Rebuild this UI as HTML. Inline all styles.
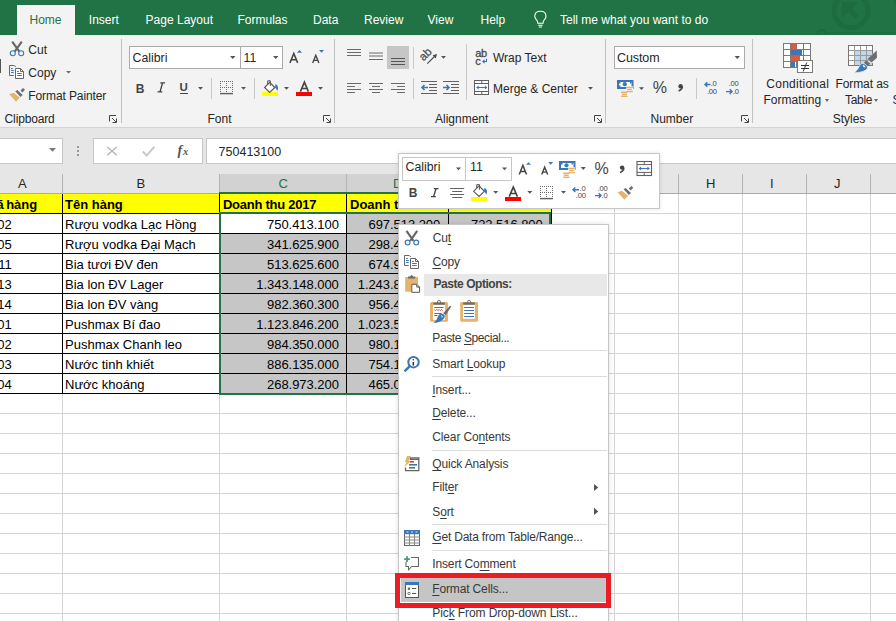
<!DOCTYPE html><html><head><meta charset="utf-8"><style>
html,body{margin:0;padding:0;width:896px;height:621px;overflow:hidden;background:#fff;position:relative;font-family:"Liberation Sans",sans-serif}
.r{position:absolute;box-sizing:border-box}
.t{position:absolute;white-space:pre}
u{text-decoration:underline;text-underline-offset:2px;text-decoration-thickness:1px}
svg.r{overflow:visible}
</style></head><body>
<div class="r" style="left:0px;top:0px;width:896px;height:35px;background:#217346"></div>
<div class="r" style="left:17px;top:5px;width:58px;height:30px;background:#f3f3f3"></div>
<span class="t" style="left:29.5px;top:13.54px;font-size:12px;line-height:12px;color:#217346;font-weight:400;">Home</span>
<span class="t" style="left:88.8px;top:13.54px;font-size:12px;line-height:12px;color:#ffffff;font-weight:400;">Insert</span>
<span class="t" style="left:145.6px;top:13.54px;font-size:12px;line-height:12px;color:#ffffff;font-weight:400;">Page Layout</span>
<span class="t" style="left:237.5px;top:13.54px;font-size:12px;line-height:12px;color:#ffffff;font-weight:400;">Formulas</span>
<span class="t" style="left:313.0px;top:13.54px;font-size:12px;line-height:12px;color:#ffffff;font-weight:400;">Data</span>
<span class="t" style="left:364.0px;top:13.54px;font-size:12px;line-height:12px;color:#ffffff;font-weight:400;">Review</span>
<span class="t" style="left:427.5px;top:13.54px;font-size:12px;line-height:12px;color:#ffffff;font-weight:400;">View</span>
<span class="t" style="left:480.5px;top:13.54px;font-size:12px;line-height:12px;color:#ffffff;font-weight:400;">Help</span>
<span class="t" style="left:560.0px;top:13.54px;font-size:12px;line-height:12px;color:#ffffff;font-weight:400;">Tell me what you want to do</span>
<div class="r" style="left:0px;top:35px;width:896px;height:92px;background:#f3f3f3"></div>
<div class="r" style="left:0px;top:127px;width:896px;height:1px;background:#d4d4d4"></div>
<div class="r" style="left:121px;top:39px;width:1px;height:84px;background:#c2c2c2"></div>
<div class="r" style="left:334px;top:39px;width:1px;height:84px;background:#c2c2c2"></div>
<div class="r" style="left:605px;top:39px;width:1px;height:84px;background:#c2c2c2"></div>
<div class="r" style="left:752px;top:39px;width:1px;height:84px;background:#c2c2c2"></div>
<div class="r" style="left:129px;top:46px;width:112px;height:23px;background:#fff;border:1px solid #ababab"></div>
<div class="r" style="left:240px;top:46px;width:43px;height:23px;background:#fff;border:1px solid #ababab"></div>
<div class="r" style="left:211px;top:78px;width:1px;height:21px;background:#c8c8c8"></div>
<div class="r" style="left:254px;top:78px;width:1px;height:21px;background:#c8c8c8"></div>
<div class="r" style="left:262px;top:92px;width:16px;height:4px;background:#ffff00"></div>
<div class="r" style="left:296px;top:92px;width:16px;height:4px;background:#ff0000"></div>
<div class="r" style="left:387px;top:46px;width:22px;height:23px;background:#c6c6c6"></div>
<div class="r" style="left:413px;top:47px;width:1px;height:22px;background:#c8c8c8"></div>
<div class="r" style="left:413px;top:78px;width:1px;height:21px;background:#c8c8c8"></div>
<div class="r" style="left:466px;top:44px;width:1px;height:56px;background:#c8c8c8"></div>
<div class="r" style="left:614px;top:46px;width:131px;height:23px;background:#fff;border:1px solid #ababab"></div>
<div class="r" style="left:696px;top:78px;width:1px;height:21px;background:#c8c8c8"></div>
<svg class="r" style="left:0;top:0" width="896" height="621" viewBox="0 0 896 621"><path d="M12.2 41.6 L19.4 51.6 M21.8 41.6 L14.6 51.6" stroke="#666" stroke-width="2.1" fill="none"/><circle cx="12.8" cy="53.3" r="2.5" stroke="#3a76b8" stroke-width="1.1" fill="#f3f3f3"/><circle cx="21.2" cy="53.3" r="2.5" stroke="#3a76b8" stroke-width="1.1" fill="#f3f3f3"/><g transform="translate(-395 -190)"><path d="M408.8 265.5 H404.5 V255.5 H409.3 L410.8 257" stroke="#666" stroke-width="1" fill="none"/><path d="M410.5 258.5 H415.5 L418.5 261.5 V268.5 H410.5 Z" stroke="#666" stroke-width="1" fill="#fff"/><path d="M415.5 258.5 V261.5 H418.5" stroke="#666" stroke-width="1" fill="none"/><path d="M406 258.5 H407.8 M406 260.5 H408.8 M406 262.5 H408.8 M412.1 261.5 H413.8 M412.1 263.5 H416.8 M412.1 265.5 H416.8" stroke="#3a76b8" stroke-width="1"/></g><path d="M9.2 94.3 L13.7 92.7 L19.8 97.8 L16 101.7 Z" fill="#e3b46a"/><path d="M15.3 91.2 L17.3 90 L22.7 95 L20.5 96.9 Z M20.5 90.4 L23 88 L25 89.8 L22.4 92.4 Z" fill="#6e6e6e"/><path d="M66 71 H71 L68.5 73.5 Z" fill="#6b6b6b"/><path d="M109.5 121.5 V115.5 H116" stroke="#444" stroke-width="1" fill="none"/><path d="M112 118 L116 122" stroke="#444" stroke-width="1" fill="none"/><path d="M116.5 118.5 V122.5 H112.5" stroke="#444" stroke-width="1" fill="none"/><path d="M323.5 121.5 V115.5 H330" stroke="#444" stroke-width="1" fill="none"/><path d="M326 118 L330 122" stroke="#444" stroke-width="1" fill="none"/><path d="M330.5 118.5 V122.5 H326.5" stroke="#444" stroke-width="1" fill="none"/><path d="M594.5 121.5 V115.5 H601" stroke="#444" stroke-width="1" fill="none"/><path d="M597 118 L601 122" stroke="#444" stroke-width="1" fill="none"/><path d="M601.5 118.5 V122.5 H597.5" stroke="#444" stroke-width="1" fill="none"/><path d="M741.5 121.5 V115.5 H748" stroke="#444" stroke-width="1" fill="none"/><path d="M744 118 L748 122" stroke="#444" stroke-width="1" fill="none"/><path d="M748.5 118.5 V122.5 H744.5" stroke="#444" stroke-width="1" fill="none"/><path d="M230 56 H235.5 L232.75 59 Z M273 56 H278.5 L275.75 59 Z" fill="#555"/><path d="M297 52.8 L299.5 50 L302 52.8 Z" fill="#3a76b8"/><path d="M319 50 H324 L321.5 52.8 Z" fill="#3a76b8"/><path d="M289.95 62.9 L293.80 53.4 L297.65 62.9 M290.67 59.76 H296.93" stroke="#444" stroke-width="1.5" fill="none" stroke-linejoin="miter"/><path d="M312.70 62.9 L315.80 55.3 L318.90 62.9 M313.22 60.37 H318.38" stroke="#444" stroke-width="1.4" fill="none" stroke-linejoin="miter"/><path d="M300.40 91.6 L304.40 82.1 L308.40 91.6 M301.14 88.46 H307.66" stroke="#444" stroke-width="1.6" fill="none" stroke-linejoin="miter"/><rect x="220" y="81" width="1" height="1" fill="#6a6a6a"/><rect x="220" y="83" width="1" height="1" fill="#6a6a6a"/><rect x="220" y="85" width="1" height="1" fill="#6a6a6a"/><rect x="220" y="87" width="1" height="1" fill="#6a6a6a"/><rect x="220" y="89" width="1" height="1" fill="#6a6a6a"/><rect x="220" y="91" width="1" height="1" fill="#6a6a6a"/><rect x="222" y="81" width="1" height="1" fill="#6a6a6a"/><rect x="222" y="87" width="1" height="1" fill="#6a6a6a"/><rect x="224" y="81" width="1" height="1" fill="#6a6a6a"/><rect x="224" y="87" width="1" height="1" fill="#6a6a6a"/><rect x="226" y="81" width="1" height="1" fill="#6a6a6a"/><rect x="226" y="83" width="1" height="1" fill="#6a6a6a"/><rect x="226" y="85" width="1" height="1" fill="#6a6a6a"/><rect x="226" y="87" width="1" height="1" fill="#6a6a6a"/><rect x="226" y="89" width="1" height="1" fill="#6a6a6a"/><rect x="226" y="91" width="1" height="1" fill="#6a6a6a"/><rect x="228" y="81" width="1" height="1" fill="#6a6a6a"/><rect x="228" y="87" width="1" height="1" fill="#6a6a6a"/><rect x="230" y="81" width="1" height="1" fill="#6a6a6a"/><rect x="230" y="87" width="1" height="1" fill="#6a6a6a"/><rect x="232" y="81" width="1" height="1" fill="#6a6a6a"/><rect x="232" y="83" width="1" height="1" fill="#6a6a6a"/><rect x="232" y="85" width="1" height="1" fill="#6a6a6a"/><rect x="232" y="87" width="1" height="1" fill="#6a6a6a"/><rect x="232" y="89" width="1" height="1" fill="#6a6a6a"/><rect x="232" y="91" width="1" height="1" fill="#6a6a6a"/><path d="M220 93.6 H233" stroke="#606060" stroke-width="1.4"/><path d="M198 87 H203 L200.5 89.7 Z" fill="#555"/><path d="M241 87 H246 L243.5 89.7 Z" fill="#555"/><path d="M284 87 H289 L286.5 89.7 Z" fill="#555"/><path d="M318 87 H323 L320.5 89.7 Z" fill="#555"/><path d="M264.6 87.5 L269.7 82.4 L274.8 87.5 L269.7 92.4 Z" stroke="#555" stroke-width="1.1" fill="#fff"/><path d="M267.7 84.3 V80.8 H270.3 V86" stroke="#555" stroke-width="1" fill="none"/><path d="M275.5 84 Q279.5 86 277.3 91 Q276.5 88.5 275 87.5 Z" fill="#3a76b8"/><path d="M347 49.5 H361" stroke="#6a6a6a" stroke-width="1"/><path d="M347 52.5 H361" stroke="#6a6a6a" stroke-width="1"/><path d="M347 55.5 H361" stroke="#6a6a6a" stroke-width="1"/><path d="M369 53 H383" stroke="#6a6a6a" stroke-width="1"/><path d="M369 56 H383" stroke="#6a6a6a" stroke-width="1"/><path d="M369 59.5 H383" stroke="#6a6a6a" stroke-width="1"/><path d="M391 58.5 H405" stroke="#555" stroke-width="1"/><path d="M391 61.5 H405" stroke="#555" stroke-width="1"/><path d="M391 64.5 H405" stroke="#555" stroke-width="1"/><path d="M347 83.5 H361" stroke="#6a6a6a" stroke-width="1"/><path d="M347 86.5 H354.98" stroke="#6a6a6a" stroke-width="1"/><path d="M347 89.5 H361" stroke="#6a6a6a" stroke-width="1"/><path d="M347 92.5 H354.98" stroke="#6a6a6a" stroke-width="1"/><path d="M369 83.5 H383" stroke="#6a6a6a" stroke-width="1"/><path d="M372.01 86.5 H379.99" stroke="#6a6a6a" stroke-width="1"/><path d="M369 89.5 H383" stroke="#6a6a6a" stroke-width="1"/><path d="M372.01 92.5 H379.99" stroke="#6a6a6a" stroke-width="1"/><path d="M391 83.5 H405" stroke="#6a6a6a" stroke-width="1"/><path d="M397.02 86.5 H405" stroke="#6a6a6a" stroke-width="1"/><path d="M391 89.5 H405" stroke="#6a6a6a" stroke-width="1"/><path d="M397.02 92.5 H405" stroke="#6a6a6a" stroke-width="1"/><text x="0" y="0" transform="translate(423.6 61.6) rotate(-45)" font-family="Liberation Sans" font-size="11.5" fill="#4a4a4a" stroke="#4a4a4a" stroke-width="0.25">ab</text><path d="M427.3 63.7 L435.5 55.5" stroke="#4a4a4a" stroke-width="1.1" fill="none"/><path d="M437 54 L432.6 55.2 L435.8 58.4 Z" fill="#4a4a4a"/><path d="M441 55.9 H446 L443.5 58.7 Z" fill="#555"/><path d="M421 81.5 H437 M429 84.5 H437 M429 87.5 H437 M429 90.5 H437 M421 93.5 H437" stroke="#606060" stroke-width="1.1"/><path d="M428 87.5 H422 M424.5 85 L422 87.5 L424.5 90" stroke="#3a76b8" stroke-width="1.6" fill="none"/><path d="M443 81.5 H459 M451 84.5 H459 M451 87.5 H459 M451 90.5 H459 M443 93.5 H459" stroke="#606060" stroke-width="1.1"/><path d="M443 87.5 H449 M446.5 85 L449 87.5 L446.5 90" stroke="#3a76b8" stroke-width="1.6" fill="none"/><text x="475.3" y="57.2" font-family="Liberation Sans" font-size="11" fill="#4a4a4a" stroke="#4a4a4a" stroke-width="0.3" letter-spacing="-0.3">ab</text><text x="475.3" y="64.5" font-family="Liberation Sans" font-size="11" fill="#4a4a4a" stroke="#4a4a4a" stroke-width="0.3">c</text><path d="M486.5 58.8 V61.5 H483 M484.6 59.8 L482.8 61.5 L484.6 63.2" stroke="#3a76b8" stroke-width="1.1" fill="none"/><rect x="474.5" y="80.5" width="14" height="14" stroke="#606060" stroke-width="1" fill="#fff"/><path d="M474.5 83.5 H488.5 M474.5 91.5 H488.5 M481.75 80.5 V83.6 M481.75 91.4 V94.5" stroke="#606060" stroke-width="1"/><path d="M476.8 87.5 H486.7" stroke="#3a76b8" stroke-width="1.1"/><path d="M476.2 87.5 L478.6 85.6 V89.4 Z M487.3 87.5 L484.9 85.6 V89.4 Z" fill="#3a76b8"/><path d="M588 87 H593 L590.5 89.7 Z" fill="#555"/><path d="M734.5 56 H740 L737.25 59 Z" fill="#555"/><rect x="618" y="81" width="14.5" height="7" stroke="#3a76b8" stroke-width="2" fill="#fff"/><path d="M619 82 h1.5 v1.5 h-1.5z M630 82 h1.5 v1.5 h-1.5z M619 85.5 h1.5 v1.5 h-1.5z" fill="#3a76b8"/><circle cx="624.8" cy="84.2" r="2.1" fill="#3a76b8"/><path d="M626.2 86.3 H633 V89.8 H626.2 Z M620.8 90.8 H627.6 V96.8 H620.8 Z" fill="#f3f3f3"/><path d="M626.8 87.4 H632.4 M627.6 89.5 H631.6 M627 91.6 H632.4 M621.6 92.3 H627 M622.4 94.3 H626.2 M621.6 96.2 H627" stroke="#e3b46a" stroke-width="1.4" stroke-linecap="round"/><path d="M639 87.2 H644 L641.5 89.9 Z" fill="#555"/><path d="M705 84.5 H710.5 M707.3 82.2 L705 84.5 L707.3 86.8" stroke="#3a76b8" stroke-width="1.4" fill="none"/><path d="M726 91.6 H732 M729.7 89.3 L732 91.6 L729.7 93.9" stroke="#3a76b8" stroke-width="1.4" fill="none"/><rect x="783.5" y="43.5" width="27" height="24" stroke="#7a7a7a" stroke-width="1" fill="#fff"/><path d="M790.5 43.5 V67.5 M796.5 43.5 V67.5 M803.5 43.5 V67.5 M783.5 49.5 H810.5 M783.5 55.5 H810.5 M783.5 61.5 H810.5" stroke="#7a7a7a" stroke-width="1"/><rect x="791" y="44" width="5.5" height="5" fill="#e05a3a"/><rect x="791" y="50" width="11" height="5" fill="#3a76b8"/><rect x="791" y="56" width="9" height="5" fill="#e05a3a"/><rect x="791" y="62" width="4" height="5" fill="#3a76b8"/><rect x="797.5" y="60.5" width="15" height="12" stroke="#7a7a7a" stroke-width="1" fill="#fff"/><path d="M801 65.5 H809 M801 68.5 H809" stroke="#333" stroke-width="1"/><path d="M803.2 71.5 L806.8 62.5" stroke="#333" stroke-width="1"/><rect x="848.5" y="45.5" width="24" height="20" fill="#fff"/><rect x="854.5" y="50.5" width="18" height="15" fill="#bdd7ee"/><path d="M854.5 45.5 V65.5 M860.5 45.5 V65.5 M866.5 45.5 V65.5 M848.5 50.5 H872.5 M848.5 55.5 H872.5 M848.5 60.5 H872.5" stroke="#999" stroke-width="1"/><rect x="848.5" y="45.5" width="24" height="20" stroke="#777" stroke-width="1" fill="none"/><path d="M873.5 53 L877.5 49.5 L878 57.5 L872 63.5 L868 60 Z" fill="#f3f3f3"/><path d="M876.7 50.5 L877 57.8 L871.5 62.5 L867.5 59 Z" fill="#6e6e6e"/><path d="M866.3 60.3 L870.2 63.8 L867.8 66.3 L863.8 62.8 Z" fill="#6e6e6e"/><path d="M862 63.5 Q867.5 64 867.5 68 Q866 72 854.5 72.8 Q858.5 69 859.5 66 Q860 63.8 862 63.5 Z" fill="#3a76b8" stroke="#f3f3f3" stroke-width="0.6"/><path d="M862.5 65 Q865.5 65 865.5 67.5 L863.5 67 Z" fill="#fff"/><path d="M537.8 23.2 Q537.8 21 536.3 19.6 Q534.8 18 534.8 16.2 Q534.8 11.2 540.4 11.2 Q546 11.2 546 16.2 Q546 18 544.5 19.6 Q543 21 543 23.2 Z M538.2 25.3 H542.6 M538.8 27 H542" stroke="#fff" stroke-width="1.1" fill="none"/><defs><clipPath id="tb"><rect x="0" y="0" width="896" height="35"/></clipPath></defs><g clip-path="url(#tb)" fill="none" stroke="#1e6a41"><circle cx="851" cy="10.8" r="16.8" stroke-width="4.8"/><path d="M845 5 L857 17.2" stroke-width="5"/><path d="M841.7 2 H858.2 L841.7 18.6 Z" fill="#1e6a41" stroke="none"/><path d="M825 32.8 H896" stroke-width="1.6"/><circle cx="821.5" cy="34" r="4" stroke-width="2"/><circle cx="907" cy="-3" r="12" stroke-width="4"/></g><path d="M160.3 82.9 H165 M157.5 91.9 H162.3 M162.6 82.9 L160 91.9" stroke="#444" stroke-width="1.4" fill="none"/><circle cx="680.6" cy="86.2" r="2.2" fill="#444"/><path d="M682.4 86.8 Q682.2 89.5 678.6 91" stroke="#444" stroke-width="1.6" fill="none"/></svg>
<span class="t" style="left:28.3px;top:43.94px;font-size:12px;line-height:12px;color:#262626;font-weight:400;">Cut</span>
<span class="t" style="left:28.3px;top:67.24px;font-size:12px;line-height:12px;color:#262626;font-weight:400;">Copy</span>
<span class="t" style="left:28.3px;top:89.84px;font-size:12px;line-height:12px;color:#262626;font-weight:400;letter-spacing:-0.1px">Format Painter</span>
<span class="t" style="left:4.6px;top:112.84px;font-size:12px;line-height:12px;color:#262626;font-weight:400;letter-spacing:-0.15px">Clipboard</span>
<span class="t" style="left:207.5px;top:113.34px;font-size:12px;line-height:12px;color:#262626;font-weight:400;">Font</span>
<span class="t" style="left:435.0px;top:113.34px;font-size:12px;line-height:12px;color:#262626;font-weight:400;">Alignment</span>
<span class="t" style="left:650.5px;top:113.34px;font-size:12px;line-height:12px;color:#262626;font-weight:400;">Number</span>
<span class="t" style="left:832.7px;top:113.34px;font-size:12px;line-height:12px;color:#262626;font-weight:400;">Styles</span>
<span class="t" style="left:132.6px;top:51.59px;font-size:12.3px;line-height:12.3px;color:#262626;font-weight:400;">Calibri</span>
<span class="t" style="left:243.5px;top:51.59px;font-size:12.3px;line-height:12.3px;color:#262626;font-weight:400;">11</span>
<span class="t" style="left:135.7px;top:82.74px;font-size:12px;line-height:12px;color:#444444;font-weight:700;">B</span>
<span class="t" style="left:179.5px;top:82.17px;font-size:11.5px;line-height:11.5px;color:#444444;font-weight:700;">U</span>
<div class="r" style="left:179.5px;top:93.3px;width:8.5px;height:1.2px;background:#444"></div>
<span class="t" style="left:493.0px;top:51.84px;font-size:12px;line-height:12px;color:#262626;font-weight:400;">Wrap Text</span>
<span class="t" style="left:493.0px;top:83.04px;font-size:12px;line-height:12px;color:#262626;font-weight:400;">Merge &amp; Center</span>
<span class="t" style="left:617.0px;top:52.02px;font-size:12.5px;line-height:12.5px;color:#262626;font-weight:400;letter-spacing:-0.1px">Custom</span>
<span class="t" style="left:652.8px;top:79.86px;font-size:16px;line-height:16px;color:#444444;font-weight:400;">%</span>
<span class="t" style="left:710.7px;top:79.87px;font-size:7.6px;line-height:7.6px;color:#444444;font-weight:400;letter-spacing:-0.2px">.0</span>
<span class="t" style="left:706.9px;top:87.67px;font-size:7.6px;line-height:7.6px;color:#444444;font-weight:400;letter-spacing:-0.2px">.00</span>
<span class="t" style="left:728.6px;top:79.87px;font-size:7.6px;line-height:7.6px;color:#444444;font-weight:400;letter-spacing:-0.2px">.00</span>
<span class="t" style="left:732.9px;top:87.67px;font-size:7.6px;line-height:7.6px;color:#444444;font-weight:400;letter-spacing:-0.2px">.0</span>
<span class="t" style="left:766.3px;top:78.24px;font-size:12px;line-height:12px;color:#262626;font-weight:400;letter-spacing:0.25px">Conditional</span>
<span class="t" style="left:763.4px;top:94.04px;font-size:12px;line-height:12px;color:#262626;font-weight:400;letter-spacing:0.05px">Formatting</span>
<span class="t" style="left:835.5px;top:78.24px;font-size:12px;line-height:12px;color:#262626;font-weight:400;letter-spacing:-0.1px">Format as</span>
<span class="t" style="left:845.0px;top:94.04px;font-size:12px;line-height:12px;color:#262626;font-weight:400;letter-spacing:-0.3px">Table</span>
<span class="t" style="left:892.4px;top:93.54px;font-size:12px;line-height:12px;color:#262626;font-weight:400;">S</span>
<div class="r" style="left:825px;top:99px;width:5px;height:3px;background:transparent;border-left:2.5px solid transparent;border-right:2.5px solid transparent;border-top:3px solid #666;box-sizing:content-box;width:0;height:0"></div>
<div class="r" style="left:874px;top:99px;width:5px;height:3px;background:transparent;border-left:2.5px solid transparent;border-right:2.5px solid transparent;border-top:3px solid #666;box-sizing:content-box;width:0;height:0"></div>
<div class="r" style="left:0px;top:59px;width:1px;height:14px;background:#555"></div>
<div class="r" style="left:0px;top:128px;width:896px;height:46px;background:#e6e6e6"></div>
<div class="r" style="left:-2px;top:138px;width:65px;height:26px;background:#fff;border:1px solid #c6c6c6"></div>
<div class="r" style="left:93px;top:138px;width:110px;height:26px;background:#fff;border:1px solid #c6c6c6"></div>
<div class="r" style="left:206px;top:138px;width:700px;height:26px;background:#fff;border:1px solid #c6c6c6"></div>
<span class="t" style="left:218.6px;top:145.72px;font-size:12.5px;line-height:12.5px;color:#262626;font-weight:400;">750413100</span>
<div class="r" style="left:0px;top:174px;width:896px;height:19px;background:#e6e6e6"></div>
<div class="r" style="left:219px;top:174px;width:127px;height:19px;background:#d2d2d2"></div>
<div class="r" style="left:346px;top:174px;width:102px;height:19px;background:#d2d2d2"></div>
<div class="r" style="left:448px;top:174px;width:103px;height:19px;background:#d2d2d2"></div>
<div class="r" style="left:62px;top:174px;width:1px;height:19px;background:#b4b4b4"></div>
<div class="r" style="left:219px;top:174px;width:1px;height:19px;background:#b4b4b4"></div>
<div class="r" style="left:346px;top:174px;width:1px;height:19px;background:#b4b4b4"></div>
<div class="r" style="left:448px;top:174px;width:1px;height:19px;background:#b4b4b4"></div>
<div class="r" style="left:551px;top:174px;width:1px;height:19px;background:#b4b4b4"></div>
<div class="r" style="left:614px;top:174px;width:1px;height:19px;background:#b4b4b4"></div>
<div class="r" style="left:678px;top:174px;width:1px;height:19px;background:#b4b4b4"></div>
<div class="r" style="left:742px;top:174px;width:1px;height:19px;background:#b4b4b4"></div>
<div class="r" style="left:806px;top:174px;width:1px;height:19px;background:#b4b4b4"></div>
<div class="r" style="left:870px;top:174px;width:1px;height:19px;background:#b4b4b4"></div>
<div class="r" style="left:934px;top:174px;width:1px;height:19px;background:#b4b4b4"></div>
<div class="r" style="left:0px;top:193px;width:896px;height:1px;background:#ababab"></div>
<div class="r" style="left:219px;top:192px;width:332px;height:2px;background:#217346"></div>
<span class="t" style="left:18.0px;top:176.60px;font-size:13px;line-height:13px;color:#262626;font-weight:400;">A</span>
<span class="t" style="left:136.5px;top:176.60px;font-size:13px;line-height:13px;color:#262626;font-weight:400;">B</span>
<span class="t" style="left:278.5px;top:176.60px;font-size:13px;line-height:13px;color:#217346;font-weight:400;">C</span>
<span class="t" style="left:393.0px;top:176.60px;font-size:13px;line-height:13px;color:#217346;font-weight:400;">D</span>
<span class="t" style="left:495.5px;top:176.60px;font-size:13px;line-height:13px;color:#217346;font-weight:400;">E</span>
<span class="t" style="left:578.5px;top:176.60px;font-size:13px;line-height:13px;color:#262626;font-weight:400;">F</span>
<span class="t" style="left:642.0px;top:176.60px;font-size:13px;line-height:13px;color:#262626;font-weight:400;">G</span>
<span class="t" style="left:706.0px;top:176.60px;font-size:13px;line-height:13px;color:#262626;font-weight:400;">H</span>
<span class="t" style="left:770.0px;top:176.60px;font-size:13px;line-height:13px;color:#262626;font-weight:400;">I</span>
<span class="t" style="left:834.0px;top:176.60px;font-size:13px;line-height:13px;color:#262626;font-weight:400;">J</span>
<span class="t" style="left:898.0px;top:176.60px;font-size:13px;line-height:13px;color:#262626;font-weight:400;">K</span>
<div class="r" style="left:0px;top:194px;width:896px;height:427px;background:#fff"></div>
<div class="r" style="left:62px;top:194px;width:1px;height:427px;background:#d4d4d4"></div>
<div class="r" style="left:219px;top:194px;width:1px;height:427px;background:#d4d4d4"></div>
<div class="r" style="left:346px;top:194px;width:1px;height:427px;background:#d4d4d4"></div>
<div class="r" style="left:448px;top:194px;width:1px;height:427px;background:#d4d4d4"></div>
<div class="r" style="left:551px;top:194px;width:1px;height:427px;background:#d4d4d4"></div>
<div class="r" style="left:614px;top:194px;width:1px;height:427px;background:#d4d4d4"></div>
<div class="r" style="left:678px;top:194px;width:1px;height:427px;background:#d4d4d4"></div>
<div class="r" style="left:742px;top:194px;width:1px;height:427px;background:#d4d4d4"></div>
<div class="r" style="left:806px;top:194px;width:1px;height:427px;background:#d4d4d4"></div>
<div class="r" style="left:870px;top:194px;width:1px;height:427px;background:#d4d4d4"></div>
<div class="r" style="left:934px;top:194px;width:1px;height:427px;background:#d4d4d4"></div>
<div class="r" style="left:0px;top:213px;width:896px;height:1px;background:#d4d4d4"></div>
<div class="r" style="left:0px;top:233px;width:896px;height:1px;background:#d4d4d4"></div>
<div class="r" style="left:0px;top:253px;width:896px;height:1px;background:#d4d4d4"></div>
<div class="r" style="left:0px;top:273px;width:896px;height:1px;background:#d4d4d4"></div>
<div class="r" style="left:0px;top:293px;width:896px;height:1px;background:#d4d4d4"></div>
<div class="r" style="left:0px;top:313px;width:896px;height:1px;background:#d4d4d4"></div>
<div class="r" style="left:0px;top:333px;width:896px;height:1px;background:#d4d4d4"></div>
<div class="r" style="left:0px;top:353px;width:896px;height:1px;background:#d4d4d4"></div>
<div class="r" style="left:0px;top:373px;width:896px;height:1px;background:#d4d4d4"></div>
<div class="r" style="left:0px;top:393px;width:896px;height:1px;background:#d4d4d4"></div>
<div class="r" style="left:0px;top:413px;width:896px;height:1px;background:#d4d4d4"></div>
<div class="r" style="left:0px;top:433px;width:896px;height:1px;background:#d4d4d4"></div>
<div class="r" style="left:0px;top:453px;width:896px;height:1px;background:#d4d4d4"></div>
<div class="r" style="left:0px;top:473px;width:896px;height:1px;background:#d4d4d4"></div>
<div class="r" style="left:0px;top:493px;width:896px;height:1px;background:#d4d4d4"></div>
<div class="r" style="left:0px;top:513px;width:896px;height:1px;background:#d4d4d4"></div>
<div class="r" style="left:0px;top:533px;width:896px;height:1px;background:#d4d4d4"></div>
<div class="r" style="left:0px;top:553px;width:896px;height:1px;background:#d4d4d4"></div>
<div class="r" style="left:0px;top:573px;width:896px;height:1px;background:#d4d4d4"></div>
<div class="r" style="left:0px;top:593px;width:896px;height:1px;background:#d4d4d4"></div>
<div class="r" style="left:0px;top:613px;width:896px;height:1px;background:#d4d4d4"></div>
<div class="r" style="left:0px;top:194px;width:551px;height:19px;background:#ffff00"></div>
<div class="r" style="left:221px;top:233px;width:328px;height:161px;background:#c6c6c6"></div>
<div class="r" style="left:347px;top:214px;width:202px;height:19px;background:#c6c6c6"></div>
<div class="r" style="left:0px;top:213px;width:551px;height:1px;background:#000"></div>
<div class="r" style="left:0px;top:233px;width:551px;height:1px;background:#000"></div>
<div class="r" style="left:0px;top:253px;width:551px;height:1px;background:#000"></div>
<div class="r" style="left:0px;top:273px;width:551px;height:1px;background:#000"></div>
<div class="r" style="left:0px;top:293px;width:551px;height:1px;background:#000"></div>
<div class="r" style="left:0px;top:313px;width:551px;height:1px;background:#000"></div>
<div class="r" style="left:0px;top:333px;width:551px;height:1px;background:#000"></div>
<div class="r" style="left:0px;top:353px;width:551px;height:1px;background:#000"></div>
<div class="r" style="left:0px;top:373px;width:551px;height:1px;background:#000"></div>
<div class="r" style="left:0px;top:393px;width:551px;height:1px;background:#000"></div>
<div class="r" style="left:62px;top:194px;width:1px;height:200px;background:#000"></div>
<div class="r" style="left:219px;top:194px;width:1px;height:200px;background:#000"></div>
<div class="r" style="left:346px;top:194px;width:1px;height:200px;background:#000"></div>
<div class="r" style="left:448px;top:194px;width:1px;height:200px;background:#000"></div>
<div class="r" style="left:551px;top:194px;width:1px;height:200px;background:#000"></div>
<span class="t" style="right:892.4px;top:197.90px;font-size:13px;line-height:13px;color:#000;font-weight:700;">Mã</span>
<span class="t" style="right:858.8px;top:197.90px;font-size:13px;line-height:13px;color:#000;font-weight:700;">hàng</span>
<span class="t" style="left:65.0px;top:197.90px;font-size:13px;line-height:13px;color:#000;font-weight:700;">Tên hàng</span>
<span class="t" style="left:222.9px;top:197.90px;font-size:13px;line-height:13px;color:#000;font-weight:700;letter-spacing:-0.25px">Doanh thu 2017</span>
<span class="t" style="left:350.0px;top:197.90px;font-size:13px;line-height:13px;color:#000;font-weight:700;">Doanh thu 2018</span>
<span class="t" style="left:451.0px;top:197.90px;font-size:13px;line-height:13px;color:#000;font-weight:700;">Doanh thu 2019</span>
<span class="t" style="right:884.2px;top:217.90px;font-size:13px;line-height:13px;color:#000;font-weight:400;">02</span>
<span class="t" style="left:65.0px;top:217.90px;font-size:13px;line-height:13px;color:#000;font-weight:400;">Rượu vodka Lạc Hồng</span>
<span class="t" style="right:557.2px;top:217.90px;font-size:13px;line-height:13px;color:#000;font-weight:400;letter-spacing:-0.05px">750.413.100</span>
<span class="t" style="right:455.8px;top:217.90px;font-size:13px;line-height:13px;color:#000;font-weight:400;letter-spacing:-0.05px">697.513.200</span>
<span class="t" style="right:884.2px;top:237.90px;font-size:13px;line-height:13px;color:#000;font-weight:400;">05</span>
<span class="t" style="left:65.0px;top:237.90px;font-size:13px;line-height:13px;color:#000;font-weight:400;">Rượu vodka Đại Mạch</span>
<span class="t" style="right:557.2px;top:237.90px;font-size:13px;line-height:13px;color:#000;font-weight:400;letter-spacing:-0.05px">341.625.900</span>
<span class="t" style="right:455.8px;top:237.90px;font-size:13px;line-height:13px;color:#000;font-weight:400;letter-spacing:-0.05px">298.450.000</span>
<span class="t" style="right:884.2px;top:257.90px;font-size:13px;line-height:13px;color:#000;font-weight:400;">11</span>
<span class="t" style="left:65.0px;top:257.90px;font-size:13px;line-height:13px;color:#000;font-weight:400;">Bia tươi ĐV đen</span>
<span class="t" style="right:557.2px;top:257.90px;font-size:13px;line-height:13px;color:#000;font-weight:400;letter-spacing:-0.05px">513.625.600</span>
<span class="t" style="right:455.8px;top:257.90px;font-size:13px;line-height:13px;color:#000;font-weight:400;letter-spacing:-0.05px">674.950.000</span>
<span class="t" style="right:884.2px;top:277.90px;font-size:13px;line-height:13px;color:#000;font-weight:400;">13</span>
<span class="t" style="left:65.0px;top:277.90px;font-size:13px;line-height:13px;color:#000;font-weight:400;">Bia lon ĐV Lager</span>
<span class="t" style="right:557.2px;top:277.90px;font-size:13px;line-height:13px;color:#000;font-weight:400;letter-spacing:-0.05px">1.343.148.000</span>
<span class="t" style="right:455.8px;top:277.90px;font-size:13px;line-height:13px;color:#000;font-weight:400;letter-spacing:-0.05px">1.243.800.000</span>
<span class="t" style="right:884.2px;top:297.90px;font-size:13px;line-height:13px;color:#000;font-weight:400;">14</span>
<span class="t" style="left:65.0px;top:297.90px;font-size:13px;line-height:13px;color:#000;font-weight:400;">Bia lon ĐV vàng</span>
<span class="t" style="right:557.2px;top:297.90px;font-size:13px;line-height:13px;color:#000;font-weight:400;letter-spacing:-0.05px">982.360.300</span>
<span class="t" style="right:455.8px;top:297.90px;font-size:13px;line-height:13px;color:#000;font-weight:400;letter-spacing:-0.05px">956.400.000</span>
<span class="t" style="right:884.2px;top:317.90px;font-size:13px;line-height:13px;color:#000;font-weight:400;">01</span>
<span class="t" style="left:65.0px;top:317.90px;font-size:13px;line-height:13px;color:#000;font-weight:400;">Pushmax Bí đao</span>
<span class="t" style="right:557.2px;top:317.90px;font-size:13px;line-height:13px;color:#000;font-weight:400;letter-spacing:-0.05px">1.123.846.200</span>
<span class="t" style="right:455.8px;top:317.90px;font-size:13px;line-height:13px;color:#000;font-weight:400;letter-spacing:-0.05px">1.023.500.000</span>
<span class="t" style="right:884.2px;top:337.90px;font-size:13px;line-height:13px;color:#000;font-weight:400;">02</span>
<span class="t" style="left:65.0px;top:337.90px;font-size:13px;line-height:13px;color:#000;font-weight:400;">Pushmax Chanh leo</span>
<span class="t" style="right:557.2px;top:337.90px;font-size:13px;line-height:13px;color:#000;font-weight:400;letter-spacing:-0.05px">984.350.000</span>
<span class="t" style="right:455.8px;top:337.90px;font-size:13px;line-height:13px;color:#000;font-weight:400;letter-spacing:-0.05px">980.100.000</span>
<span class="t" style="right:884.2px;top:357.90px;font-size:13px;line-height:13px;color:#000;font-weight:400;">03</span>
<span class="t" style="left:65.0px;top:357.90px;font-size:13px;line-height:13px;color:#000;font-weight:400;">Nước tinh khiết</span>
<span class="t" style="right:557.2px;top:357.90px;font-size:13px;line-height:13px;color:#000;font-weight:400;letter-spacing:-0.05px">886.135.000</span>
<span class="t" style="right:455.8px;top:357.90px;font-size:13px;line-height:13px;color:#000;font-weight:400;letter-spacing:-0.05px">754.100.000</span>
<span class="t" style="right:884.2px;top:377.90px;font-size:13px;line-height:13px;color:#000;font-weight:400;">04</span>
<span class="t" style="left:65.0px;top:377.90px;font-size:13px;line-height:13px;color:#000;font-weight:400;">Nước khoáng</span>
<span class="t" style="right:557.2px;top:377.90px;font-size:13px;line-height:13px;color:#000;font-weight:400;letter-spacing:-0.05px">268.973.200</span>
<span class="t" style="right:455.8px;top:377.90px;font-size:13px;line-height:13px;color:#000;font-weight:400;letter-spacing:-0.05px">465.000.000</span>
<span class="t" style="right:353.3px;top:217.90px;font-size:13px;line-height:13px;color:#000;font-weight:400;letter-spacing:-0.05px">722.516.800</span>
<div class="r" style="left:219px;top:212px;width:332px;height:183px;border:2px solid #217346"></div>
<div class="r" style="left:398px;top:153px;width:262px;height:56px;background:#fff;border:1px solid #c6c6c6;box-shadow:0 0 4px rgba(0,0,0,0.12)"></div>
<div class="r" style="left:398px;top:224px;width:211px;height:420px;background:#fff;border:1px solid #c6c6c6;box-shadow:0 0 5px rgba(0,0,0,0.13)"></div>
<div class="r" style="left:424px;top:274px;width:183px;height:22px;background:#e8e8e8"></div>
<div class="r" style="left:432px;top:350px;width:175px;height:1px;background:#dcdcdc"></div>
<div class="r" style="left:432px;top:376px;width:175px;height:1px;background:#dcdcdc"></div>
<div class="r" style="left:432px;top:450px;width:175px;height:1px;background:#dcdcdc"></div>
<div class="r" style="left:432px;top:524px;width:175px;height:1px;background:#dcdcdc"></div>
<div class="r" style="left:432px;top:550px;width:175px;height:1px;background:#dcdcdc"></div>
<span class="t" style="left:432.7px;top:231.64px;font-size:12px;line-height:12px;color:#383838;font-weight:400;letter-spacing:-0.15px">Cu<u>t</u></span>
<span class="t" style="left:432.4px;top:255.54px;font-size:12px;line-height:12px;color:#383838;font-weight:400;letter-spacing:-0.15px"><u>C</u>opy</span>
<span class="t" style="left:433.5px;top:278.04px;font-size:12px;line-height:12px;color:#444;font-weight:700;letter-spacing:-0.45px">Paste Options:</span>
<span class="t" style="left:432.3px;top:331.84px;font-size:12px;line-height:12px;color:#383838;font-weight:400;letter-spacing:-0.4px">Paste <u>S</u>pecial...</span>
<span class="t" style="left:432.3px;top:357.84px;font-size:12px;line-height:12px;color:#383838;font-weight:400;letter-spacing:-0.15px">Smart <u>L</u>ookup</span>
<span class="t" style="left:432.3px;top:384.14px;font-size:12px;line-height:12px;color:#383838;font-weight:400;letter-spacing:-0.15px"><u>I</u>nsert...</span>
<span class="t" style="left:432.3px;top:407.44px;font-size:12px;line-height:12px;color:#383838;font-weight:400;letter-spacing:-0.15px"><u>D</u>elete...</span>
<span class="t" style="left:432.3px;top:431.44px;font-size:12px;line-height:12px;color:#383838;font-weight:400;letter-spacing:-0.15px">Clear Co<u>n</u>tents</span>
<span class="t" style="left:432.3px;top:457.84px;font-size:12px;line-height:12px;color:#383838;font-weight:400;letter-spacing:-0.15px"><u>Q</u>uick Analysis</span>
<span class="t" style="left:432.3px;top:481.34px;font-size:12px;line-height:12px;color:#383838;font-weight:400;letter-spacing:-0.15px">Filt<u>e</u>r</span>
<span class="t" style="left:432.3px;top:505.74px;font-size:12px;line-height:12px;color:#383838;font-weight:400;letter-spacing:-0.15px">S<u>o</u>rt</span>
<span class="t" style="left:432.3px;top:531.44px;font-size:12px;line-height:12px;color:#383838;font-weight:400;letter-spacing:-0.2px"><u>G</u>et Data from Table/Range...</span>
<span class="t" style="left:432.3px;top:557.74px;font-size:12px;line-height:12px;color:#383838;font-weight:400;letter-spacing:-0.15px">Insert Co<u>m</u>ment</span>
<div class="r" style="left:401px;top:578px;width:205px;height:24px;background:#c5c5c5"></div>
<span class="t" style="left:432.3px;top:583.04px;font-size:12px;line-height:12px;color:#383838;font-weight:400;letter-spacing:-0.15px"><u>F</u>ormat Cells...</span>
<span class="t" style="left:432.3px;top:606.84px;font-size:12px;line-height:12px;color:#383838;font-weight:400;letter-spacing:-0.1px">Pic<u>k</u> From Drop-down List...</span>
<div class="r" style="left:402px;top:157px;width:64px;height:24px;background:#fff;border:1px solid #c6c6c6"></div>
<div class="r" style="left:465px;top:157px;width:47px;height:24px;background:#fff;border:1px solid #c6c6c6"></div>
<span class="t" style="left:405.6px;top:160.99px;font-size:12.3px;line-height:12.3px;color:#262626;font-weight:400;">Calibri</span>
<span class="t" style="left:470.0px;top:160.99px;font-size:12.3px;line-height:12.3px;color:#262626;font-weight:400;">11</span>
<span class="t" style="left:594.6px;top:161.16px;font-size:16px;line-height:16px;color:#444;font-weight:400;">%</span>
<span class="t" style="left:408.7px;top:187.24px;font-size:12px;line-height:12px;color:#444;font-weight:700;">B</span>
<div class="r" style="left:471px;top:197px;width:16px;height:4px;background:#ffff00"></div>
<div class="r" style="left:505px;top:197px;width:16px;height:4px;background:#ff0000"></div>
<span class="t" style="left:579.6px;top:185.37px;font-size:7.6px;line-height:7.6px;color:#444;font-weight:400;letter-spacing:-0.2px">.0</span>
<span class="t" style="left:575.8px;top:192.07px;font-size:7.6px;line-height:7.6px;color:#444;font-weight:400;letter-spacing:-0.2px">.00</span>
<span class="t" style="left:597.6px;top:185.37px;font-size:7.6px;line-height:7.6px;color:#444;font-weight:400;letter-spacing:-0.2px">.00</span>
<span class="t" style="left:601.6px;top:192.07px;font-size:7.6px;line-height:7.6px;color:#444;font-weight:400;letter-spacing:-0.2px">.0</span>
<svg class="r" style="left:0;top:0" width="896" height="621" viewBox="0 0 896 621"><path d="M456 167.5 H461 L458.5 170.2 Z M502 167.5 H507 L504.5 170.2 Z" fill="#555"/><path d="M519.25 174.6 L522.90 165.3 L526.55 174.6 M519.91 171.53 H525.89" stroke="#444" stroke-width="1.5" fill="none" stroke-linejoin="miter"/><path d="M541.70 174.6 L544.70 167.20000000000002 L547.70 174.6 M542.18 172.14 H547.22" stroke="#444" stroke-width="1.4" fill="none" stroke-linejoin="miter"/><path d="M526 164.8 L528.5 162.3 L531 164.8 Z" fill="#3a76b8"/><path d="M548.2 162 H553.2 L550.7 164.8 Z" fill="#3a76b8"/><rect x="560" y="162" width="14.5" height="7" stroke="#3a76b8" stroke-width="2" fill="#fff"/><path d="M561 163 h1.5 v1.5 h-1.5z M571.5 163 h1.5 v1.5 h-1.5z" fill="#3a76b8"/><circle cx="566.5" cy="165.3" r="2.1" fill="#3a76b8"/><path d="M568.2 167.3 H575 V170.8 H568.2 Z M562.8 171.8 H569.6 V177.8 H562.8 Z" fill="#fff"/><path d="M568.8 168.4 H574.4 M569.6 170.5 H573.6 M569 172.6 H574.4 M563.6 173.3 H569 M564.4 175.3 H568.2 M563.6 177.2 H569" stroke="#e3b46a" stroke-width="1.4" stroke-linecap="round"/><path d="M580.8 167 H585.8 L583.3 169.9 Z" fill="#555"/><circle cx="622.1" cy="167.6" r="2.2" fill="#444"/><path d="M623.9 168.2 Q623.7 170.9 620.1 172.4" stroke="#444" stroke-width="1.6" fill="none"/><rect x="637" y="161.5" width="14.5" height="14" stroke="#606060" stroke-width="1.1" fill="#fff"/><path d="M637 164.6 H651.5 M637 172.4 H651.5 M644.25 161.5 V164.6 M644.25 172.4 V175.5" stroke="#606060" stroke-width="1"/><path d="M639.3 168.5 H649.2" stroke="#3a76b8" stroke-width="1.1"/><path d="M638.7 168.5 L641.1 166.6 V170.4 Z M649.8 168.5 L647.4 166.6 V170.4 Z" fill="#3a76b8"/><path d="M433.8 188.6 H438.5 M431 196.6 H435.8 M436.1 188.6 L433.5 196.6" stroke="#444" stroke-width="1.4" fill="none"/><path d="M450.2 188.5 H464.2 M452.2 191.5 H462.2 M450.2 194.5 H464.2 M452.2 197.5 H462.2" stroke="#606060" stroke-width="1"/><path d="M473.6 191.3 L479 185.9 L484.4 191.3 L479 196.5 Z" stroke="#555" stroke-width="1.1" fill="#fff"/><path d="M476.8 188.1 V184.6 H479.4 V189.8" stroke="#555" stroke-width="1" fill="none"/><path d="M484.5 187.8 Q488.5 189.8 486.3 194.8 Q485.5 192.3 484 191.3 Z" fill="#3a76b8"/><path d="M493.2 191 H498.2 L495.7 193.8 Z M527.3 191 H532.3 L529.8 193.8 Z M561 191 H566 L563.5 193.8 Z" fill="#555"/><path d="M509.20 196.6 L513.30 187.10000000000002 L517.40 196.6 M509.97 193.46 H516.63" stroke="#444" stroke-width="1.6" fill="none" stroke-linejoin="miter"/><rect x="540" y="186" width="1" height="1" fill="#6a6a6a"/><rect x="540" y="188" width="1" height="1" fill="#6a6a6a"/><rect x="540" y="190" width="1" height="1" fill="#6a6a6a"/><rect x="540" y="192" width="1" height="1" fill="#6a6a6a"/><rect x="540" y="194" width="1" height="1" fill="#6a6a6a"/><rect x="540" y="196" width="1" height="1" fill="#6a6a6a"/><rect x="542" y="186" width="1" height="1" fill="#6a6a6a"/><rect x="542" y="192" width="1" height="1" fill="#6a6a6a"/><rect x="544" y="186" width="1" height="1" fill="#6a6a6a"/><rect x="544" y="192" width="1" height="1" fill="#6a6a6a"/><rect x="546" y="186" width="1" height="1" fill="#6a6a6a"/><rect x="546" y="188" width="1" height="1" fill="#6a6a6a"/><rect x="546" y="190" width="1" height="1" fill="#6a6a6a"/><rect x="546" y="192" width="1" height="1" fill="#6a6a6a"/><rect x="546" y="194" width="1" height="1" fill="#6a6a6a"/><rect x="546" y="196" width="1" height="1" fill="#6a6a6a"/><rect x="548" y="186" width="1" height="1" fill="#6a6a6a"/><rect x="548" y="192" width="1" height="1" fill="#6a6a6a"/><rect x="550" y="186" width="1" height="1" fill="#6a6a6a"/><rect x="550" y="192" width="1" height="1" fill="#6a6a6a"/><rect x="552" y="186" width="1" height="1" fill="#6a6a6a"/><rect x="552" y="188" width="1" height="1" fill="#6a6a6a"/><rect x="552" y="190" width="1" height="1" fill="#6a6a6a"/><rect x="552" y="192" width="1" height="1" fill="#6a6a6a"/><rect x="552" y="194" width="1" height="1" fill="#6a6a6a"/><rect x="552" y="196" width="1" height="1" fill="#6a6a6a"/><path d="M540 198.6 H553" stroke="#606060" stroke-width="1.4"/><path d="M573 189.7 H579 M575.3 187.4 L573 189.7 L575.3 192" stroke="#3a76b8" stroke-width="1.4" fill="none"/><path d="M595 195.6 H601 M598.7 193.3 L601 195.6 L598.7 197.9" stroke="#3a76b8" stroke-width="1.4" fill="none"/><g transform="translate(608.3 98)"><path d="M9.2 94.3 L13.7 92.7 L19.8 97.8 L16 101.7 Z" fill="#e3b46a"/><path d="M15.3 91.2 L17.3 90 L22.7 95 L20.5 96.9 Z M20.5 90.4 L23 88 L25 89.8 L22.4 92.4 Z" fill="#6e6e6e"/></g><path d="M406.5 230.8 L413.5 240.8 M417.2 230.8 L410.2 240.8" stroke="#666" stroke-width="2.1" fill="none"/><circle cx="407.6" cy="242.6" r="2.4" stroke="#3a76b8" stroke-width="1.2" fill="#fff"/><circle cx="416.2" cy="242.6" r="2.4" stroke="#3a76b8" stroke-width="1.2" fill="#fff"/><path d="M408.8 265.5 H404.5 V255.5 H409.3 L410.8 257" stroke="#666" stroke-width="1" fill="none"/><path d="M410.5 258.5 H415.5 L418.5 261.5 V268.5 H410.5 Z" stroke="#666" stroke-width="1" fill="#fff"/><path d="M415.5 258.5 V261.5 H418.5" stroke="#666" stroke-width="1" fill="none"/><path d="M406 258.5 H407.8 M406 260.5 H408.8 M406 262.5 H408.8 M412.1 261.5 H413.8 M412.1 263.5 H416.8 M412.1 265.5 H416.8" stroke="#3a76b8" stroke-width="1"/><path d="M405.2 277 H418 V284 H411.5 V291.7 H405.2 Z" fill="#e3b46a"/><path d="M408 278.5 H415.2 V276.6 H413 Q412.6 275 411.6 275 Q410.6 275 410.2 276.6 H408 Z" fill="#6b6b6b"/><path d="M411.8 284.3 H416.8 L419.6 287.1 V292.3 H411.8 Z M416.8 284.3 V287.1 H419.6" stroke="#555" stroke-width="1" fill="#fff" stroke-linejoin="round"/><rect x="430" y="302" width="18" height="19.8" rx="1.5" fill="#e3b46a"/><rect x="433" y="304.5" width="12" height="15.5" fill="#fff"/><path d="M433.2 304.8 H444.8 V302.5 H441.2 Q440.5 299.8 439 299.8 Q437.5 299.8 436.8 302.5 H433.2 Z" fill="#6b6b6b"/><circle cx="439" cy="301.6" r="0.9" fill="#fff"/><path d="M434.3 307.5 H443.5 M434.3 313.5 H441.5 M434.3 315.5 H437.5" stroke="#3a76b8" stroke-width="1"/><path d="M434.3 309.3 l1.2 1.4 l1.2 -1.4 l1.2 1.4 l1.2 -1.4 l1.2 1.4 l1.2 -1.4 l1.2 1.4" stroke="#d9534f" stroke-width="0.9" fill="none"/><path d="M443.2 313.3 L450 305.8 L451.3 306.6 L445.6 315.2 Z" fill="#6b6b6b"/><path d="M442.5 313.8 Q445.8 314.8 444.2 318.2 Q441.5 322 433.5 323.2 Q437.2 320 437.6 317.2 Q439 313.2 442.5 313.8 Z" fill="#3a76b8"/><path d="M441 315.5 Q443 316 442 317.5" stroke="#fff" stroke-width="0.9" fill="none"/><rect x="460.2" y="302" width="17.8" height="19.8" rx="1.5" fill="#e3b46a"/><rect x="463" y="304.5" width="12" height="14.3" fill="#fff"/><path d="M463.2 304.8 H474.8 V302.5 H471.2 Q470.5 299.8 469 299.8 Q467.5 299.8 466.8 302.5 H463.2 Z" fill="#6b6b6b"/><circle cx="469" cy="301.6" r="0.9" fill="#fff"/><path d="M464.2 307.5 H474 M464.2 310.5 H474 M464.2 313.5 H474 M464.2 316.5 H474" stroke="#3a76b8" stroke-width="1"/><circle cx="413.5" cy="362.2" r="5.2" stroke="#3a76b8" stroke-width="2" fill="#fff"/><path d="M409.3 366.6 L405.2 370.7" stroke="#3a76b8" stroke-width="2.4" stroke-linecap="round"/><path d="M413.3 362 V365.5" stroke="#333" stroke-width="1.5"/><circle cx="413.3" cy="359.7" r="0.8" fill="#333"/><path d="M410.8 457.8 H418.8 V470.6 H405.5 V467.5" stroke="#666" stroke-width="1.3" fill="#fff"/><path d="M410.4 457.2 V459.3 H418.8" stroke="#666" stroke-width="1.5" fill="none"/><path d="M407 456 H411 L408.5 461 H411 L404.3 467 L406.5 462 H404.8 Z" fill="#e3b46a"/><rect x="410" y="461" width="4" height="1.6" fill="#d24726"/><rect x="409" y="464" width="8" height="1.6" fill="#3a76b8"/><rect x="409" y="467" width="6" height="1.6" fill="#3b8a5e"/><rect x="404.5" y="530.5" width="15" height="15" stroke="#666" stroke-width="1" fill="#fff"/><rect x="404" y="530" width="16" height="4.2" fill="#3a76b8"/><path d="M406.5 532 H408.5 M411 532 H413 M415.5 532 H417.5" stroke="#fff" stroke-width="0.8"/><path d="M409.5 534 V545.5 M414.5 534 V545.5 M404.5 537 H419.5 M404.5 540 H419.5 M404.5 543 H419.5" stroke="#888" stroke-width="1"/><path d="M406 562 V566.5 H408.5 V570 L411.5 566.5 H418.5 V557.5 H411" stroke="#666" stroke-width="1.1" fill="none" stroke-linejoin="round"/><path d="M407 556.3 V562 M404.1 559.2 H409.9" stroke="#4a9a76" stroke-width="1.8"/><rect x="405.5" y="582.5" width="13" height="15" stroke="#555" stroke-width="1" fill="#fff"/><rect x="405" y="582" width="14" height="3" fill="#3a76b8"/><circle cx="409" cy="588.8" r="1.3" fill="#666"/><circle cx="409" cy="593.5" r="1.2" stroke="#666" stroke-width="0.9" fill="#fff"/><path d="M412 588.5 H416.2 M412 593.5 H416.2" stroke="#555" stroke-width="1"/><path d="M594 484 L598.3 487.5 L594 491 Z M594 507.8 L598.3 511.4 L594 515 Z" fill="#555"/><path d="M107.2 147 L116.8 155.3 M116.8 147 L107.2 155.3" stroke="#b3b3b3" stroke-width="1.3"/><path d="M142.8 151.5 L146.8 155.6 L154.3 146.6" stroke="#c8c8c8" stroke-width="2" fill="none"/><path d="M49 148 H56 L52.5 151.8 Z" fill="#777"/><rect x="77" y="146" width="2" height="2" fill="#999"/><rect x="77" y="150" width="2" height="2" fill="#999"/><rect x="77" y="154" width="2" height="2" fill="#999"/><text x="177.5" y="154.5" font-family="Liberation Serif" font-style="italic" font-weight="bold" font-size="14" fill="#555">f</text><text x="183" y="155.3" font-family="Liberation Serif" font-style="italic" font-weight="bold" font-size="10.5" fill="#555">x</text></svg>
<div class="r" style="left:395px;top:573px;width:216px;height:35px;border:5px solid #ec1c24"></div>
</body></html>
